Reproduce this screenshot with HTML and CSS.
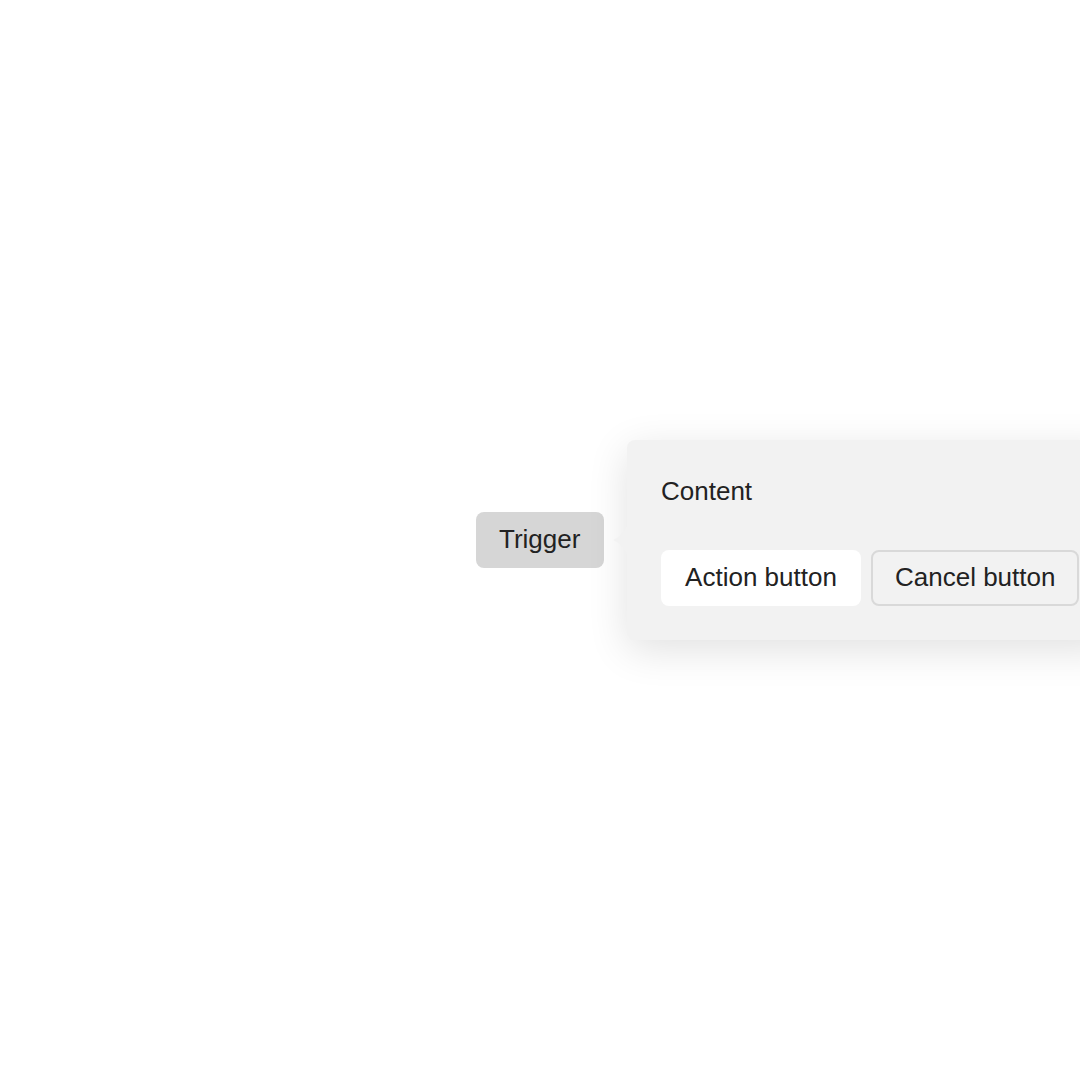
FILE: index.html
```html
<!DOCTYPE html>
<html>
<head>
<meta charset="utf-8">
<link rel="stylesheet" href="styles.css">
</head>
<body>
<div class="anchor">
  <button class="trigger">Trigger</button>
  <div class="popover">
    <svg class="arrow" width="16" height="36" viewBox="0 0 16 36"><path d="M16 2 C12 11 6 16 1 18 C6 20 12 25 16 34 Z" fill="#f2f2f2"/></svg>
    <div class="content">Content</div>
    <div class="actions">
      <button class="btn action">Action button</button>
      <button class="btn cancel">Cancel button</button>
    </div>
  </div>
</div>
</body>
</html>
```
FILE: styles.css
```css
html, body {
  margin: 0;
  height: 100%;
  overflow: hidden;
  background: #fff;
}
body {
  display: flex;
  align-items: center;
  justify-content: center;
  font-family: "Liberation Sans", Arial, sans-serif;
  color: #222;
}
.anchor {
  position: relative;
}
.trigger {
  display: block;
  font: inherit;
  font-size: 26px;
  color: #222;
  background: #d6d6d6;
  border: none;
  border-radius: 8px;
  height: 56px;
  padding: 0 25px 2px 23px;
  width: 128px;
}
.popover {
  position: absolute;
  left: calc(100% + 23px);
  top: 50%;
  transform: translateY(-50%);
  background: #f2f2f2;
  border-radius: 8px;
  padding: 34px;
  white-space: nowrap;
  box-shadow: 0 10px 40px rgba(0, 0, 0, 0.12);
  font-size: 26px;
}
.arrow {
  position: absolute;
  left: -15px;
  top: 50%;
  transform: translateY(-50%);
}
.content {
  line-height: 34px;
  height: 34px;
  margin-bottom: 42px;
}
.actions {
  display: flex;
  gap: 10px;
}
.btn {
  font: inherit;
  color: #222;
  height: 56px;
  border-radius: 8px;
  padding: 0 24px 2px;
}
.action {
  background: #fff;
  border: none;
  width: 200px;
}
.cancel {
  background: #f2f2f2;
  border: 2px solid #d9d9d9;
  padding: 0 22px 2px;
  width: 208px;
}
```
